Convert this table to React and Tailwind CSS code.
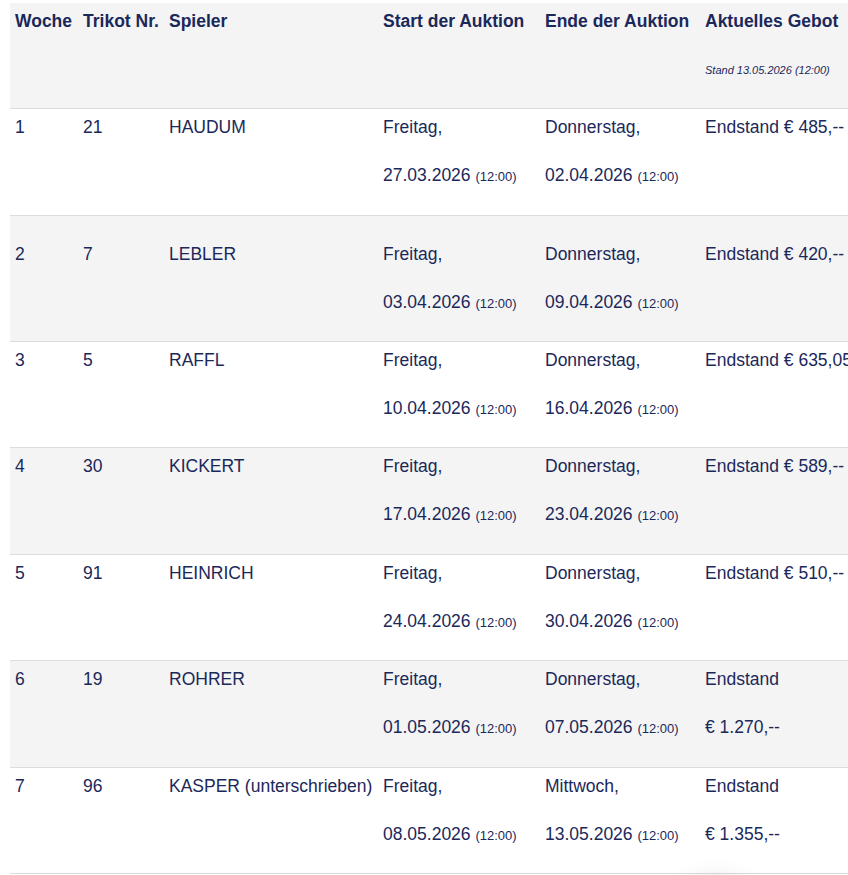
import React from "react";

const rows = [
    { woche: "1", nr: "21", name: "HAUDUM", start: "27.03.2026", endDay: "Donnerstag,", end: "02.04.2026", bid: ["Endstand € 485,--"], h: "h-[107px]", pt: "pt-[6px]", bg: "bg-white" },
    { woche: "2", nr: "7", name: "LEBLER", start: "03.04.2026", endDay: "Donnerstag,", end: "09.04.2026", bid: ["Endstand € 420,--"], h: "h-[126px]", pt: "pt-[26px]", bg: "bg-[#f4f4f4]" },
    { woche: "3", nr: "5", name: "RAFFL", start: "10.04.2026", endDay: "Donnerstag,", end: "16.04.2026", bid: ["Endstand € 635,05"], h: "h-[106px]", pt: "pt-[6px]", bg: "bg-white" },
    { woche: "4", nr: "30", name: "KICKERT", start: "17.04.2026", endDay: "Donnerstag,", end: "23.04.2026", bid: ["Endstand € 589,--"], h: "h-[107px]", pt: "pt-[6px]", bg: "bg-[#f4f4f4]" },
    { woche: "5", nr: "91", name: "HEINRICH", start: "24.04.2026", endDay: "Donnerstag,", end: "30.04.2026", bid: ["Endstand € 510,--"], h: "h-[106px]", pt: "pt-[6px]", bg: "bg-white" },
    { woche: "6", nr: "19", name: "ROHRER", start: "01.05.2026", endDay: "Donnerstag,", end: "07.05.2026", bid: ["Endstand", "€ 1.270,--"], h: "h-[107px]", pt: "pt-[6px]", bg: "bg-[#f4f4f4]" },
    { woche: "7", nr: "96", name: "KASPER (unterschrieben)", start: "08.05.2026", endDay: "Mittwoch,", end: "13.05.2026", bid: ["Endstand", "€ 1.355,--"], h: "h-[106px]", pt: "pt-[6px]", bg: "bg-white" },
];

const cols = "grid grid-cols-[68px_86px_214px_162px_160px_220px]";

const DateCell = ({ day, date }) => (
    <div className="px-[5px] flex flex-col">
        <div className="h-[24px] leading-[24px]">{day}</div>
        <div className="h-[24px]"></div>
        <div className="h-[24px] leading-[24px] whitespace-nowrap">
            {date} <span className="text-[13px]">(12:00)</span>
        </div>
    </div>
);

const App = () => {
    return (
        <div className="relative w-[848px] h-[875px] overflow-hidden bg-white text-[#1b285a] text-[17.5px] font-['Liberation_Sans',Arial,sans-serif]">
            <div className="ml-[10px] mt-[3px] w-[880px]">
                {/* Header */}
                <div className={`${cols} h-[106px] bg-[#f4f4f4] border-b border-[#dcdcdc] font-bold pt-[6px]`}>
                    <div className="px-[5px] leading-[24px]">Woche</div>
                    <div className="px-[5px] leading-[24px] whitespace-nowrap">Trikot Nr.</div>
                    <div className="px-[5px] leading-[24px]">Spieler</div>
                    <div className="px-[5px] leading-[24px] whitespace-nowrap">Start der Auktion</div>
                    <div className="px-[5px] leading-[24px] whitespace-nowrap">Ende der Auktion</div>
                    <div className="px-[5px] flex flex-col">
                        <div className="leading-[24px] whitespace-nowrap">Aktuelles Gebot</div>
                        <div className="mt-[30px] text-[11px] italic font-normal leading-[14px] whitespace-nowrap">
                            Stand 13.05.2026 (12:00)
                        </div>
                    </div>
                </div>

                {rows.map((r) => (
                    <div key={r.woche} className={`${cols} ${r.h} ${r.pt} ${r.bg} border-b border-[#dcdcdc]`}>
                        <div className="px-[5px] leading-[24px]">{r.woche}</div>
                        <div className="px-[5px] leading-[24px]">{r.nr}</div>
                        <div className="px-[5px] leading-[24px] whitespace-nowrap">{r.name}</div>
                        <DateCell day="Freitag," date={r.start} />
                        <DateCell day={r.endDay} date={r.end} />
                        <div className="px-[5px] flex flex-col">
                            <div className="h-[24px] leading-[24px] whitespace-nowrap">{r.bid[0]}</div>
                            {r.bid[1] && (
                                <>
                                    <div className="h-[24px]"></div>
                                    <div className="h-[24px] leading-[24px] whitespace-nowrap">{r.bid[1]}</div>
                                </>
                            )}
                        </div>
                    </div>
                ))}
            </div>

            {/* shadow of floating element below the fold */}
            <div className="absolute left-[680px] top-[888px] w-[70px] h-[70px] rounded-full bg-white shadow-[0_0_28px_rgba(0,0,0,0.35)]"></div>
        </div>
    );
};

export default App;
